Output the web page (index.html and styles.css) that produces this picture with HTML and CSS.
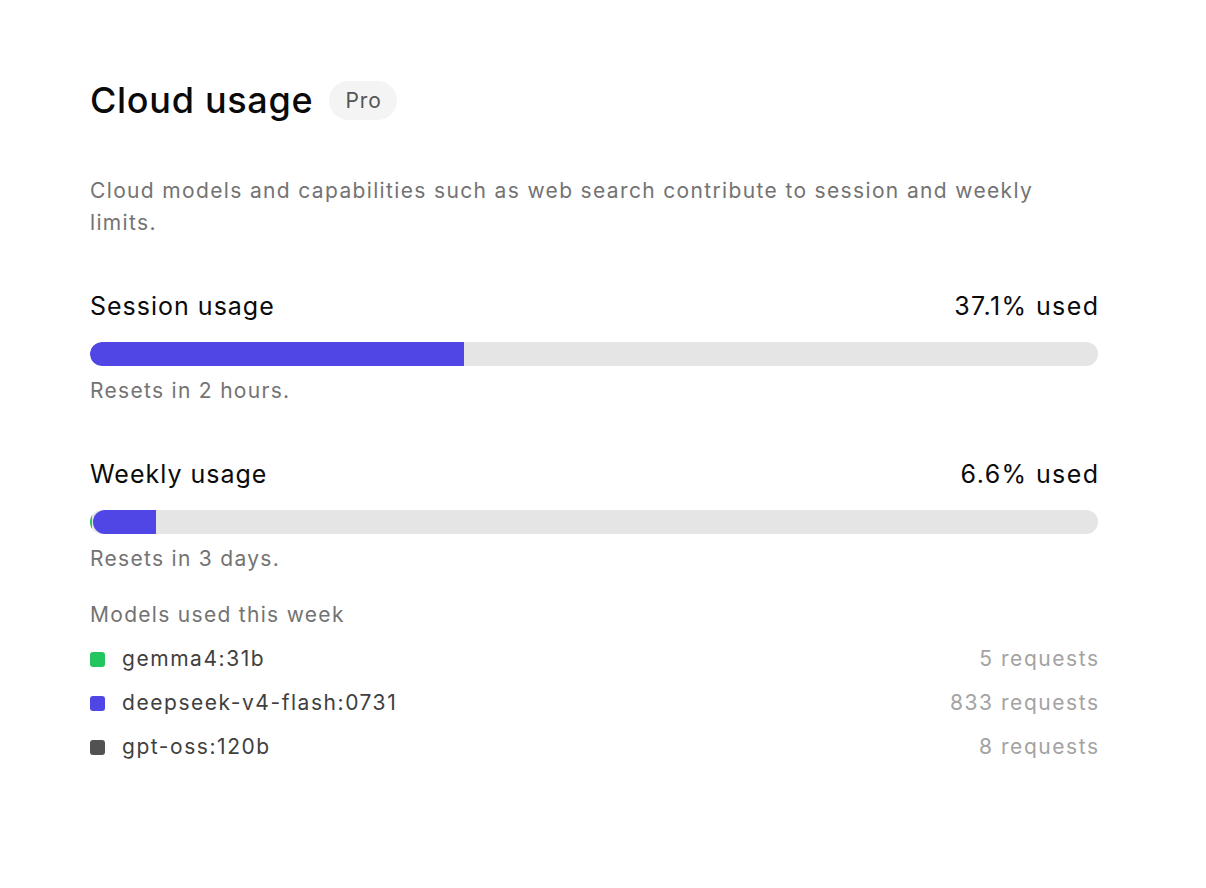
FILE: index.html
```html
<!DOCTYPE html>
<html lang="en">
<head>
  <meta charset="UTF-8" />
  <meta name="viewport" content="width=device-width, initial-scale=1.0"/>
  <title>Cloud usage</title>
  <link rel="stylesheet" href="styles.css">
</head>
<body>
  <div class="page">
    <div class="header">
      <h1 class="title">Cloud usage</h1>
      <span class="badge">Pro</span>
    </div>
    <p class="desc">Cloud models and capabilities such as web search contribute to session and weekly limits.</p>

    <div class="usage">
      <div class="usage-head"><span>Session usage</span><span class="pct">37.1% used</span></div>
      <div class="track">
        <div class="seg blue" style="width: 37.1%"></div>
      </div>
      <div class="note">Resets in 2 hours.</div>
    </div>

    <div class="usage">
      <div class="usage-head"><span>Weekly usage</span><span class="pct">6.6% used</span></div>
      <div class="track">
        <div class="seg green" style="width: 2px"></div>
        <div class="seg blue" style="width: 63px"></div>
      </div>
      <div class="note">Resets in 3 days.</div>
    </div>

    <div class="models">
      <div class="models-title">Models used this week</div>
      <div class="model"><span class="dot green"></span><span class="name">gemma4:31b</span><span class="count">5 requests</span></div>
      <div class="model"><span class="dot blue"></span><span class="name">deepseek-v4-flash:0731</span><span class="count">833 requests</span></div>
      <div class="model"><span class="dot dark"></span><span class="name">gpt-oss:120b</span><span class="count">8 requests</span></div>
    </div>
  </div>
</body>
</html>
```

FILE: styles.css
```css
body {
  margin: 0;
  font-family: Inter, "Noto Sans", sans-serif;
  background: #fff;
  color: #0a0a0a;
}
.page { width: 1008px; padding: 78px 90px 0; }
.header { display: flex; align-items: center; gap: 16px; height: 44px; }
.title { margin: 0; font-size: 36px; font-weight: 500; line-height: 44px; letter-spacing: 0.7px; }
.badge { background: #f4f4f4; color: #555; font-size: 21px; line-height: 39px; padding: 0 15px 0 16px; border-radius: 20px; letter-spacing: 1px; }
.desc { margin: 53px 0 0; font-size: 21px; line-height: 32px; color: #737373; letter-spacing: 1.35px; }
.usage { margin-top: 51px; }
.usage-head { display: flex; justify-content: space-between; font-size: 25px; line-height: 32px; letter-spacing: 1px; }
.pct { margin-right: -1.4px; letter-spacing: 1.4px; }
.track { display: flex; height: 24px; margin-top: 20px; background: #e5e5e5; border-radius: 12px; overflow: hidden; }
.seg { height: 100%; }
.seg.blue { border-radius: 12px 0 0 12px; }
.track .green + .blue { margin-left: 1px; }
.note { margin-top: 9px; font-size: 21px; line-height: 32px; color: #737373; letter-spacing: 1.3px; }
.models { display: flex; flex-direction: column; gap: 12px; margin-top: 24px; }
.models-title { font-size: 21px; line-height: 32px; color: #737373; letter-spacing: 1.3px; }
.model { display: flex; align-items: center; font-size: 21px; line-height: 32px; letter-spacing: 1.55px; }
.dot { width: 15px; height: 15px; border-radius: 3px; margin-right: 17px; }
.name { color: #404040; flex: 1; }
.count { color: #a3a3a3; margin-right: -1.55px; }
.green { background: #22c55e; }
.blue { background: #4f46e5; }
.dark { background: #525252; }
```
